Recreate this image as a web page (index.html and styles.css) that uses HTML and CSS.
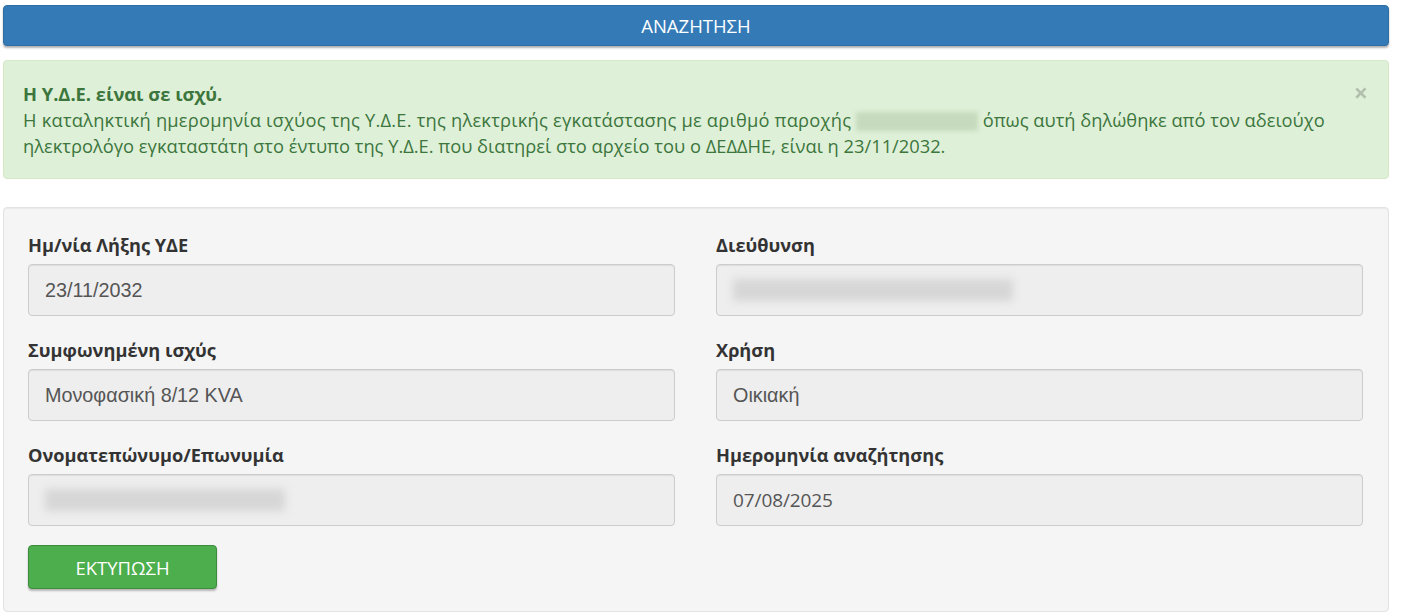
FILE: index.html
```html
<!DOCTYPE html>
<html lang="el">
  <head>
    <meta charset="UTF-8" />
    <title>Αναζήτηση Υ.Δ.Ε.</title>
    <link rel="stylesheet" href="styles.css">
  </head>
  <body>
    <div class="page">
      <button class="btn-search">ΑΝΑΖΗΤΗΣΗ</button>

      <div class="alert">
        <span class="close">&times;</span>
        <strong>Η Υ.Δ.Ε. είναι σε ισχύ.</strong><br />
        <span class="lead">Η καταληκτική ημερομηνία ισχύος της Υ.Δ.Ε. της ηλεκτρικής εγκατάστασης με αριθμό παροχής</span>
        <span class="hidden-num"></span>
        όπως αυτή δηλώθηκε από τον αδειούχο ηλεκτρολόγο εγκαταστάτη στο έντυπο της Υ.Δ.Ε. που διατηρεί στο αρχείο του ο ΔΕΔΔΗΕ, είναι η 23/11/2032.
      </div>

      <div class="well">
        <div class="grid">
          <div class="field">
            <label>Ημ/νία Λήξης ΥΔΕ</label>
            <div class="input">23/11/2032</div>
          </div>
          <div class="field">
            <label>Διεύθυνση</label>
            <div class="input"><span class="blur w280"></span></div>
          </div>
          <div class="field">
            <label>Συμφωνημένη ισχύς</label>
            <div class="input">Μονοφασική 8/12 KVA</div>
          </div>
          <div class="field">
            <label>Χρήση</label>
            <div class="input">Οικιακή</div>
          </div>
          <div class="field">
            <label>Ονοματεπώνυμο/Επωνυμία</label>
            <div class="input"><span class="blur w240"></span></div>
          </div>
          <div class="field">
            <label>Ημερομηνία αναζήτησης</label>
            <div class="input narrow">07/08/2025</div>
          </div>
        </div>
        <button class="btn-print">ΕΚΤΥΠΩΣΗ</button>
      </div>
    </div>
  </body>
</html>
```

FILE: styles.css
```css
body {
  margin: 0;
  background: #fff;
  font-family: "Open Sans", "Liberation Sans", sans-serif;
  color: #333;
}

.page {
  width: 1386px;
  padding: 5px 0 0 3px;
}

.btn-search {
  display: block;
  width: 100%;
  height: 41px;
  background-color: #337ab7;
  border: 1px solid #2e6da4;
  border-radius: 4px;
  box-shadow: 0 2px 2px rgba(0, 0, 0, 0.3);
  color: white;
  font-family: "Open Sans", sans-serif;
  font-size: 18.5px;
  padding: 0;
}

.alert {
  position: relative;
  margin-top: 14px;
  background-color: #dff0d8;
  border: 1px solid #d6e9c6;
  border-radius: 4px;
  color: #3c763d;
  font-size: 18.3px;
  line-height: 26px;
  padding: 20px 50px 19px 19px;
}

.alert strong {
  font-weight: 700;
}

.lead {
  letter-spacing: 0.22px;
}

.close {
  position: absolute;
  right: 20px;
  top: 18px;
  font-size: 25px;
  font-weight: 700;
  color: #000;
  opacity: 0.2;
}

.hidden-num {
  display: inline-block;
  width: 122px;
  height: 19px;
  vertical-align: -4px;
  background: #c6dbbd;
  filter: blur(2px);
}

.well {
  margin-top: 28px;
  background-color: #f5f5f5;
  border: 1px solid #e3e3e3;
  border-radius: 4px;
  box-shadow: inset 0 1px 1px rgba(0, 0, 0, 0.05);
  padding: 24px 25px 22px 24px;
}

.grid {
  display: grid;
  grid-template-columns: 647px 647px;
  column-gap: 41px;
}

.field label {
  display: block;
  font-weight: 700;
  font-size: 18.2px;
  line-height: 26px;
  margin-bottom: 6px;
}

.input {
  box-sizing: border-box;
  height: 52px;
  background-color: #eee;
  border: 1px solid #ccc;
  border-radius: 4px;
  box-shadow: inset 0 1px 1px rgba(0, 0, 0, 0.075);
  padding: 0 16px;
  display: flex;
  align-items: center;
  font-family: "Liberation Sans", Arial, sans-serif;
  font-size: 19.8px;
  color: #555;
  margin-bottom: 21px;
}

.input.narrow {
  font-family: "Open Sans", sans-serif;
  font-size: 19px;
  letter-spacing: -0.1px;
}

.blur {
  display: inline-block;
  height: 22px;
  background: #d6d6d6;
  filter: blur(4px);
}

.w280 {
  width: 280px;
}

.w240 {
  width: 240px;
}

.btn-print {
  width: 189px;
  height: 44px;
  margin-top: -2px;
  background-color: #4cae4c;
  border: 1px solid #3d8b3d;
  border-radius: 4px;
  box-shadow: 0 2px 2px rgba(0, 0, 0, 0.25);
  color: white;
  font-family: "Open Sans", sans-serif;
  font-size: 18.5px;
  padding: 0;
}
```
